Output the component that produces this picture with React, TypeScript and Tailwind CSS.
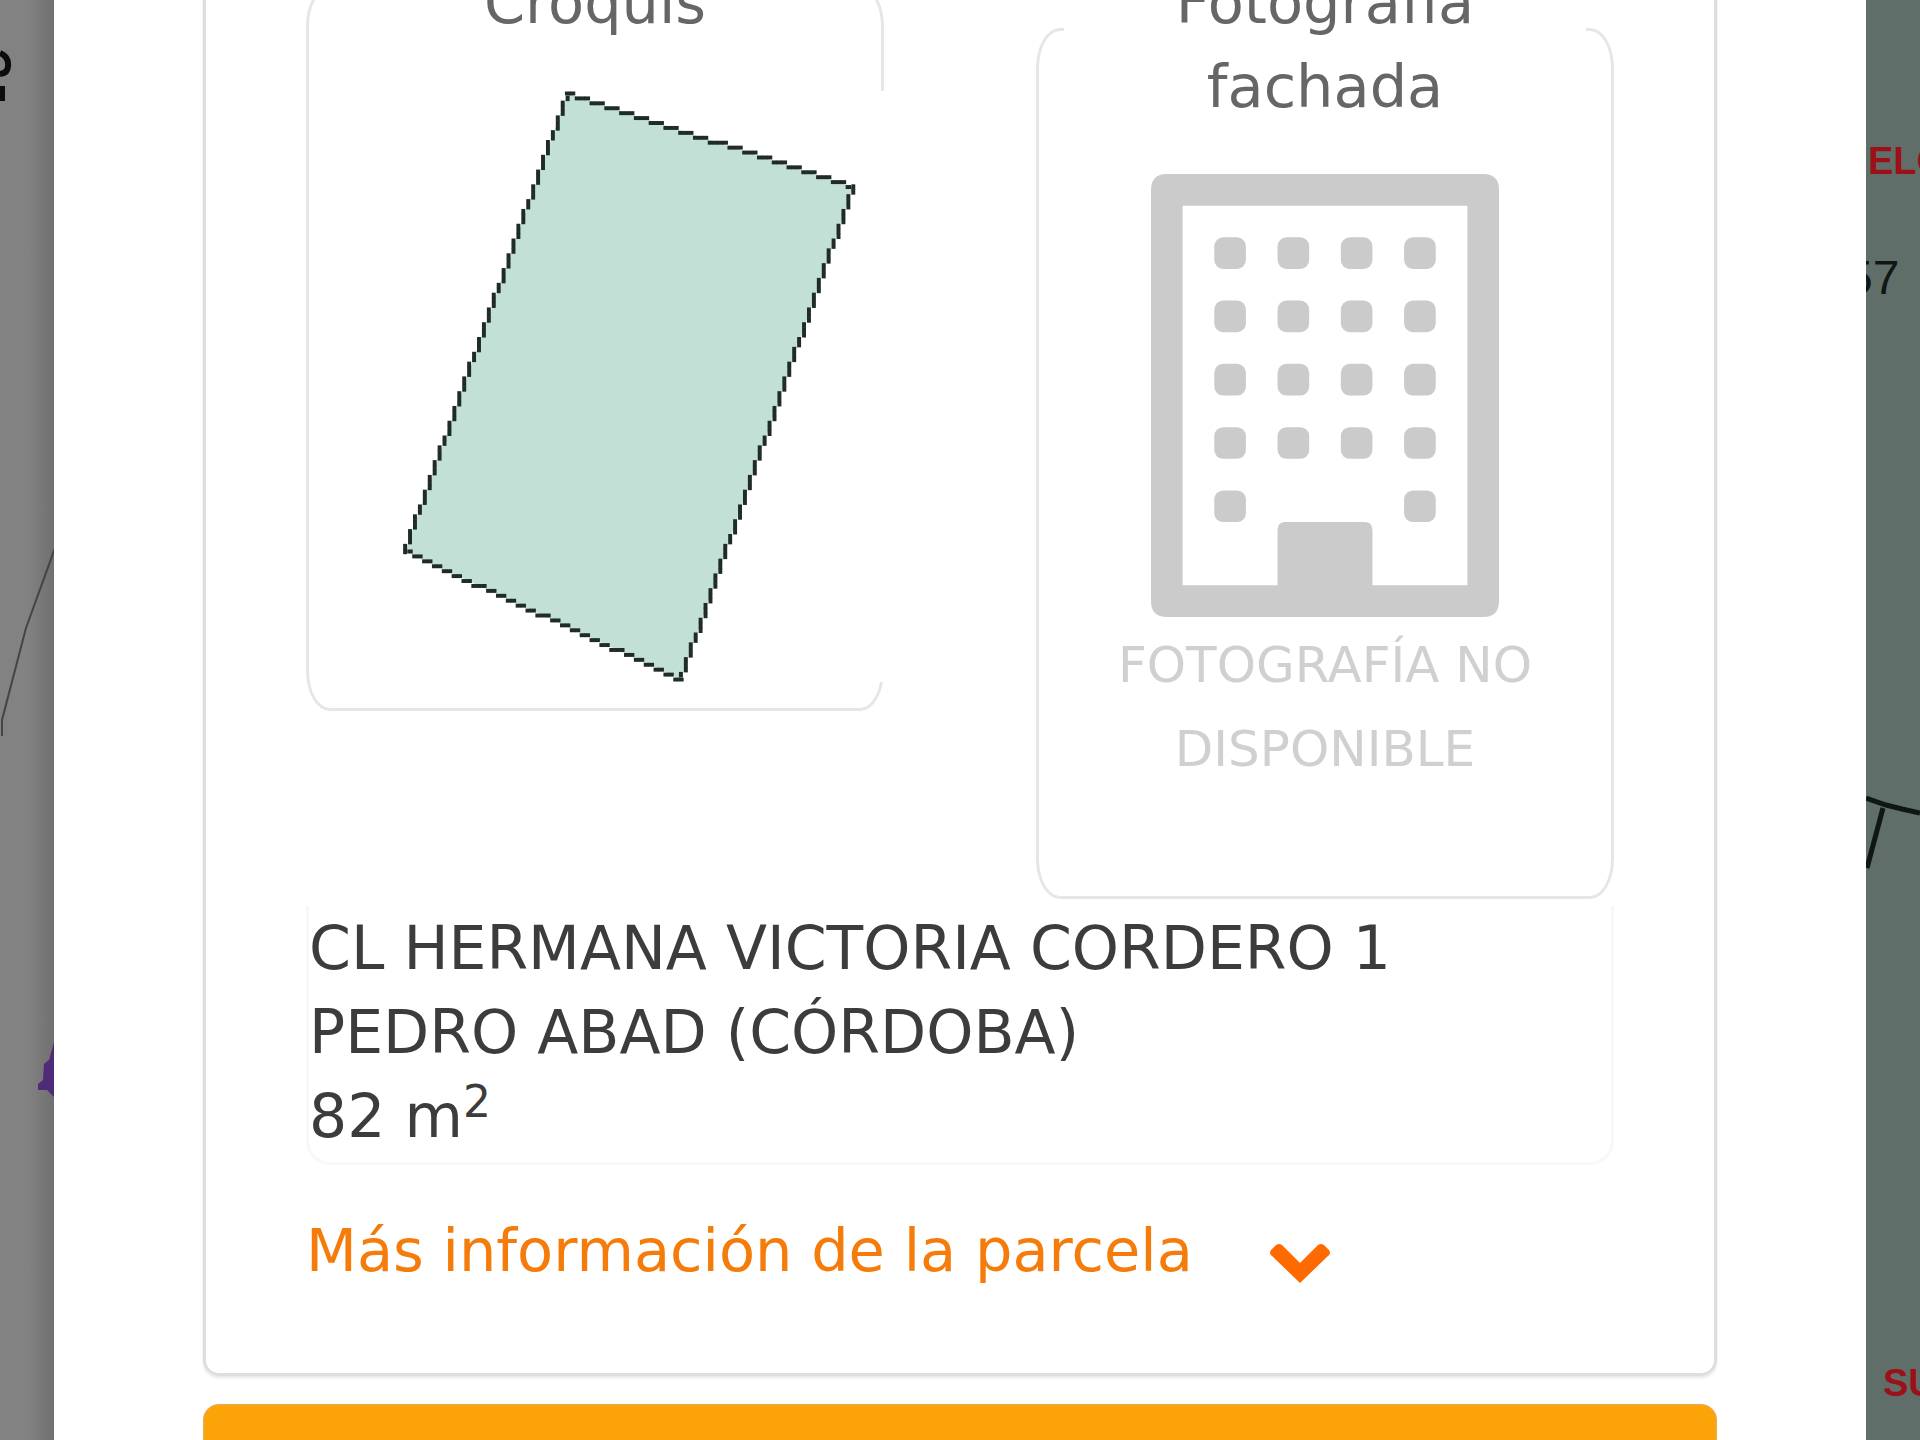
import React from "react";

interface Point {
    x: number;
    y: number;
}

interface Cell extends Point {
    steep: boolean;
}

// corners of the parcel in the 120x120 sketch grid
const parcel: Point[] = [
    { x: 51, y: 0 },
    { x: 109, y: 19 },
    { x: 74, y: 119 },
    { x: 18, y: 93 },
];

const windows: Point[] = [0, 1, 2, 3, 4].flatMap((row) =>
    [0, 1, 2, 3]
        .filter((col) => row < 4 || col === 0 || col === 3)
        .map((col) => ({ x: 256 + col * 256, y: 256 + row * 256 }))
);

const lineCells = (from: Point, to: Point): Cell[] => {
    const dx = to.x - from.x;
    const dy = to.y - from.y;
    const steps = Math.max(Math.abs(dx), Math.abs(dy));

    return Array.from({ length: steps }, (_, i) => ({
        x: Math.round(from.x + (dx * i) / steps),
        y: Math.round(from.y + (dy * i) / steps),
        steep: Math.abs(dy) > Math.abs(dx),
    }));
};

const ParcelSketch: React.FC = () => {
    const outline = parcel.flatMap((point, i) => lineCells(point, parcel[(i + 1) % parcel.length]));

    return (
        <svg viewBox="0 0 120 120" className="ml-[5px] block h-[591px] w-[591px] max-w-none bg-white" role="img" aria-label="Croquis">
            <polygon points={parcel.map(({ x, y }) => `${x + 0.5},${y + 0.5}`).join(" ")} fill="#c3e0d7" />
            {outline.map(({ x, y, steep }, index) => (
                <rect
                    key={index}
                    x={steep ? x + 0.1 : x - 0.05}
                    y={steep ? y - 0.05 : y + 0.1}
                    width={steep ? 0.8 : 1.1}
                    height={steep ? 1.1 : 0.8}
                    fill="#1f2b29"
                />
            ))}
        </svg>
    );
};

const BuildingIcon: React.FC = () => (
    <svg viewBox="0 0 1408 1792" className="h-[443px] w-[348px] text-[#cbcbcb]" fill="currentColor" aria-hidden="true">
        <path
            fillRule="evenodd"
            d="M64 0H1344Q1408 0 1408 64V1728Q1408 1792 1344 1792H64Q0 1792 0 1728V64Q0 0 64 0ZM128 128V1664H512V1440Q512 1408 544 1408H864Q896 1408 896 1440V1664H1280V128Z"
        />
        {windows.map(({ x, y }) => (
            <rect key={`${x}-${y}`} x={x} y={y} width="128" height="128" rx="36" />
        ))}
    </svg>
);

interface FrameProps {
    title: string;
    children: React.ReactNode;
}

const Frame: React.FC<FrameProps> = ({ title, children }) => (
    <fieldset className="min-w-0 rounded-[24px/40px] border-[3px] border-[#e6e6e6]">
        <legend className="mx-auto max-w-[522px] px-[100px] pt-8 text-center text-[#666]">{title}</legend>
        {children}
    </fieldset>
);

const App: React.FC = () => {
    return (
        <div className="flex h-screen overflow-hidden bg-white font-['DejaVu_Sans',Verdana,sans-serif] text-[59px] leading-[84px] text-[#3c3c3c]">
            <div className="relative w-[54px] shrink-0 overflow-hidden bg-linear-to-r from-[#828282] from-50% to-[#707070]">
                <svg viewBox="0 0 54 1440" className="absolute top-0 left-0 h-[1440px] w-[54px]" aria-hidden="true">
                    <path d="M0 53Q9 57 8 66Q8 73 0 74M2 86V101" fill="none" stroke="#0c0c0c" strokeWidth="6" />
                    <path d="M55 548L26 628L2 720V736" fill="none" stroke="#444" strokeWidth="2" />
                    <path d="M54 1042L49 1060L44 1064L43 1080L38 1084V1090H47L54 1097Z" fill="#4f2b78" />
                </svg>
            </div>

            <main className="min-w-0 flex-1 px-[149px]">
                <section className="-mt-[100px] rounded-2xl border-[3px] border-[#dedede] px-[100px] pt-[26px] pb-[80px] shadow-[0_2px_3px_#0000001a]">
                    <div className="grid grid-cols-2 items-start gap-x-[152px]">
                        <Frame title="Croquis">
                            <div className="pt-[46px] pb-[26px]">
                                <ParcelSketch />
                            </div>
                        </Frame>
                        <Frame title="Fotografía fachada">
                            <div className="flex flex-col items-center pt-[45px] pb-[105px] text-center text-[50px] leading-[84px] text-[#d0d0d0]">
                                <BuildingIcon />
                                <p className="max-w-[450px] pt-[6px]">FOTOGRAFÍA NO DISPONIBLE</p>
                            </div>
                        </Frame>
                    </div>

                    <address className="mt-[7px] rounded-b-3xl border-x-[3px] border-b-[3px] border-[#f8f8f8] pb-1 text-[60px] not-italic">
                        <p>CL HERMANA VICTORIA CORDERO 1</p>
                        <p>PEDRO ABAD (CÓRDOBA)</p>
                        <p>
                            82 m<sup className="-top-[0.45em] text-[44px] leading-none">2</sup>
                        </p>
                    </address>

                    <button type="button" className="mt-[44px] flex items-center gap-[76px] text-[#f57c0a]">
                        Más información de la parcela
                        <svg viewBox="0 0 62 40" className="mt-6 h-10 w-[62px]" aria-hidden="true">
                            <path
                                d="M2 7L7 2Q10 0 13 2L31 20L49 2Q52 0 55 2L60 7Q62 10 60 12L31 40L2 12Q0 10 2 7Z"
                                fill="#ff6a00"
                            />
                        </svg>
                    </button>
                </section>

                <button type="button" aria-label="Continuar" className="mt-7 block h-[120px] w-full rounded-2xl border-2 border-[#f0a830] bg-[#fca407]" />
            </main>

            <div className="relative w-[54px] shrink-0 overflow-hidden bg-[#606e69] font-['Liberation_Sans',Arial,sans-serif] leading-none">
                <span className="absolute top-[142px] left-[2px] text-[38px] font-bold text-[#9c1018]">ELO</span>
                <span className="absolute top-[254px] -left-[20px] text-[48px] text-[#101614]">57</span>
                <svg viewBox="0 0 54 1440" className="absolute top-0 left-0 h-[1440px] w-[54px]" aria-hidden="true">
                    <path d="M0 798L20 805L36 809L54 813M17 808L1 868" fill="none" stroke="#101614" strokeWidth="5" />
                </svg>
                <span className="absolute top-[1364px] left-[17px] text-[38px] font-bold text-[#9c1018]">SU</span>
            </div>
        </div>
    );
};

export default App;
